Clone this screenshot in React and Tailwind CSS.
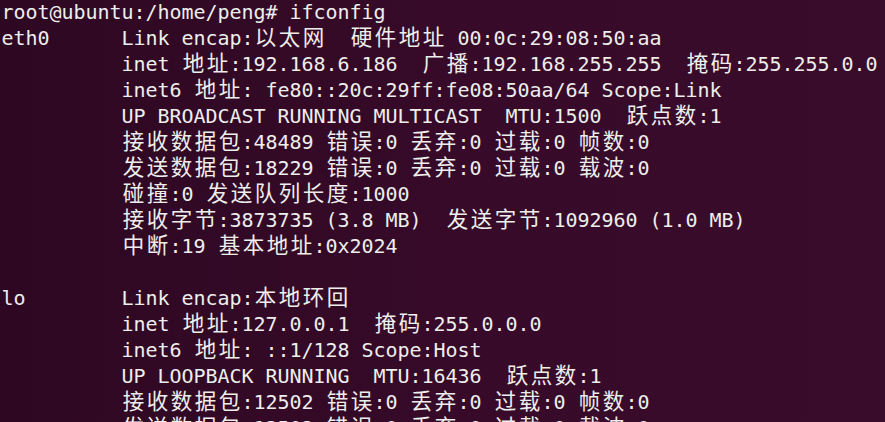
import React from 'react';

// terminal output, one string per row
const lines = [
  'root@ubuntu:/home/peng# ifconfig',
  'eth0      Link encap:以太网  硬件地址 00:0c:29:08:50:aa',
  '          inet 地址:192.168.6.186  广播:192.168.255.255  掩码:255.255.0.0',
  '          inet6 地址: fe80::20c:29ff:fe08:50aa/64 Scope:Link',
  '          UP BROADCAST RUNNING MULTICAST  MTU:1500  跃点数:1',
  '          接收数据包:48489 错误:0 丢弃:0 过载:0 帧数:0',
  '          发送数据包:18229 错误:0 丢弃:0 过载:0 载波:0',
  '          碰撞:0 发送队列长度:1000',
  '          接收字节:3873735 (3.8 MB)  发送字节:1092960 (1.0 MB)',
  '          中断:19 基本地址:0x2024',
  '',
  'lo        Link encap:本地环回',
  '          inet 地址:127.0.0.1  掩码:255.0.0.0',
  '          inet6 地址: ::1/128 Scope:Host',
  '          UP LOOPBACK RUNNING  MTU:16436  跃点数:1',
  '          接收数据包:12502 错误:0 丢弃:0 过载:0 帧数:0',
  '          发送数据包:12502 错误:0 丢弃:0 过载:0 载波:0',
];

const isWide = (ch) => ch.codePointAt(0) > 0x2e80;

const Cell = ({ ch }) => {
  if (isWide(ch)) {
    return (
      <span className="inline-block w-[24px] text-center font-['Noto_Sans_CJK_SC',sans-serif] text-[21.5px] leading-none">
        {ch}
      </span>
    );
  }
  return (
    <span className="inline-block w-[12px] text-center leading-none">
      {ch === ' ' ? '\u00a0' : ch}
    </span>
  );
};

const Row = ({ text }) => (
  <div className="h-[26px] leading-[26px] whitespace-nowrap">
    {Array.from(text).map((ch, i) => (
      <Cell key={i} ch={ch} />
    ))}
  </div>
);

export default function App() {
  return (
    <div className="w-[885px] h-[422px] overflow-hidden bg-linear-to-r from-[#2e0823] via-[#360a28] to-[#390c2b] text-[#eeeeec] font-['DejaVu_Sans_Mono',monospace] text-[20px] antialiased">
      <div className="-mt-px pl-[1.5px]">
        {lines.map((l, i) => (
          <Row key={i} text={l} />
        ))}
      </div>
    </div>
  );
}
